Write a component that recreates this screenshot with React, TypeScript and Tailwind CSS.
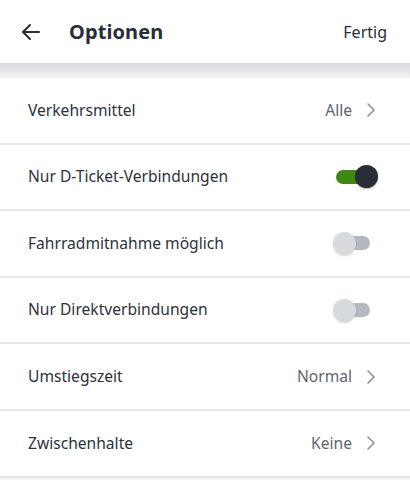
import React, { useState } from 'react';

type Row =
  | { id: string; label: string; kind: 'link'; value: string }
  | { id: string; label: string; kind: 'toggle'; on: boolean };

const rows: Row[] = [
  { id: 'mode', label: 'Verkehrsmittel', kind: 'link', value: 'Alle' },
  { id: 'dticket', label: 'Nur D-Ticket-Verbindungen', kind: 'toggle', on: true },
  { id: 'bike', label: 'Fahrradmitnahme möglich', kind: 'toggle', on: false },
  { id: 'direct', label: 'Nur Direktverbindungen', kind: 'toggle', on: false },
  { id: 'transfer', label: 'Umstiegszeit', kind: 'link', value: 'Normal' },
  { id: 'stops', label: 'Zwischenhalte', kind: 'link', value: 'Keine' },
];

const Toggle = ({ on, onClick }: { on: boolean; onClick: () => void }) => (
  <button onClick={onClick} className="relative w-[46px] h-[24px] flex items-center">
    <span
      className={
        on
          ? 'absolute left-[4px] right-[8px] h-[14px] rounded-full bg-[#408814]'
          : 'absolute left-[10px] right-[8px] h-[14px] rounded-full bg-[#b4b8bf]'
      }
    />
    <span
      className={
        on
          ? 'absolute right-0 w-[23px] h-[23px] rounded-full bg-[#282d37] shadow-[0_1px_2px_rgba(0,0,0,0.3)]'
          : 'absolute left-[1px] w-[23px] h-[23px] rounded-full bg-[#d8dbde] shadow-[0_1px_2px_rgba(0,0,0,0.15)]'
      }
    />
  </button>
);

const Chevron = () => (
  <svg width="10" height="16" viewBox="0 0 10 16" fill="none" className="ml-[14px]">
    <path d="M2 2l6 6-6 6" stroke="#8c9099" strokeWidth="1.6" strokeLinecap="round" strokeLinejoin="round" />
  </svg>
);

export default function App() {
  const [state, setState] = useState<Record<string, boolean>>({ dticket: true, bike: false, direct: false });

  return (
    <div className="w-[410px] h-[480px] overflow-hidden bg-white text-[#282d37] font-['Noto_Sans',sans-serif]">
      <header className="h-[63px] flex items-center pl-[21px] pr-[23px]">
        <svg width="20" height="18" viewBox="0 0 20 18" fill="none">
          <path d="M18 9H2M9 2L2 9l7 7" stroke="#282d37" strokeWidth="2" strokeLinecap="round" strokeLinejoin="round" />
        </svg>
        <h1 className="ml-[28px] text-[20px] font-bold tracking-[0.1px]">Optionen</h1>
        <button className="ml-auto text-[16px] text-[#282d37]">Fertig</button>
      </header>
      <div className="h-[15px] bg-gradient-to-b from-[#d9dadd] to-[#f1f2f4]" />

      <ul>
        {rows.map((row) => (
          <li key={row.id} className="h-[66.6px] flex items-center pl-[28px] pr-[32px] border-b-2 border-[#e6e7e9]">
            <span className="text-[15.6px] text-[#2d323b]">{row.label}</span>
            <div className="ml-auto flex items-center">
              {row.kind === 'link' ? (
                <>
                  <span className="text-[15.6px] text-[#60656e]">{row.value}</span>
                  <span className="mr-[2px] flex">
                    <Chevron />
                  </span>
                </>
              ) : (
                <Toggle
                  on={state[row.id]}
                  onClick={() => setState((s) => ({ ...s, [row.id]: !s[row.id] }))}
                />
              )}
            </div>
          </li>
        ))}
      </ul>
      <div className="h-[10px] bg-[#f1f2f4]" />
    </div>
  );
}
